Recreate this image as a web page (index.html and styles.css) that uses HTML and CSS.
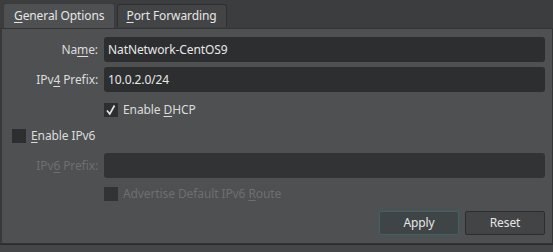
FILE: index.html
```html
<!DOCTYPE html>
<html>
	<head>
		<meta charset="utf-8" />
		<title>NAT Network</title>
		<link rel="stylesheet" href="styles.css">
	</head>
	<body>
<div class="tabs">
    <div class="tab active"><u>G</u>eneral Options</div>
    <div class="tab"><u>P</u>ort Forwarding</div>
</div>
<div class="pane">
    <div class="row">
        <label class="lbl">Na<u>m</u>e:</label>
        <div class="field">NatNetwork-CentOS9</div>
    </div>
    <div class="row">
        <label class="lbl">IPv<u>4</u> Prefix:</label>
        <div class="field">10.0.2.0/24</div>
    </div>
    <div class="row check-row">
        <span class="box"><svg width="14" height="14" viewBox="0 0 14 14"><polyline points="3,7.5 5.8,11 10.5,2.5" fill="none" stroke="#e4e4e4" stroke-width="1.7"/></svg></span>
        <span>Enable <u>D</u>HCP</span>
    </div>
    <div class="row outer">
        <span class="box"></span>
        <span><u>E</u>nable IPv6</span>
    </div>
    <div class="row off">
        <label class="lbl">IPv<u>6</u> Prefix:</label>
        <div class="field"></div>
    </div>
    <div class="row check-row off">
        <span class="box"></span>
        <span>Advertise Default IPv6 <u>R</u>oute</span>
    </div>
    <div class="buttons">
        <div class="btn apply">Apply</div>
        <div class="btn">Reset</div>
    </div>
</div>
<div class="foot"></div>
	</body>
</html>
```

FILE: styles.css
```css
* {
    margin: 0;
    padding: 0;
    box-sizing: border-box;
}
body {
    width: 553px;
    height: 252px;
    background: #3c3d3f;
    font-family: "Noto Sans", "Liberation Sans", sans-serif;
    font-size: 12px;
    letter-spacing: -0.1px;
    color: #dcdcdc;
    overflow: hidden;
}
u {
    text-decoration: underline;
    text-underline-offset: 2px;
}
.tabs {
    display: flex;
    align-items: flex-end;
    height: 28px;
    padding-left: 3px;
    gap: 2px;
}
.tab {
    height: 23px;
    padding: 0 9px 0 8px;
    line-height: 21px;
    background: #434446;
    border: 1px solid #2e2f31;
    border-bottom: none;
    border-radius: 3px 3px 0 0;
    color: #e6e6e6;
    margin-bottom: 1px;
}
.tab.active {
    height: 25px;
    padding: 0 10px;
    line-height: 23px;
    background: #4f5052;
    margin-bottom: 0;
    border-color: #3a3b3d;
}
.pane {
    height: 216px;
    background: #4f5052;
    border: 1px solid #333436;
    border-left: 2px solid #39393b;
    padding: 8px 7px 0 10px;
}
.row {
    display: flex;
    align-items: center;
    height: 25px;
    margin-bottom: 5px;
}
.lbl {
    width: 92px;
    text-align: right;
    padding-right: 6px;
}
.field {
    flex: 1;
    height: 25px;
    background: #2d2e30;
    border-radius: 3px;
    padding-left: 4px;
    line-height: 25px;
    color: #e8e8e8;
}
.check-row {
    padding-left: 92px;
}
.check-row.off {
    margin-top: -2px;
}
.box {
    width: 14px;
    height: 14px;
    background: #2d2e30;
    margin-right: 5px;
}
.box svg {
    display: block;
}
.row.outer {
    margin-top: -4px;
}
.off {
    color: #6e6f71;
}
.off .box, .off .field {
    background: #323335;
}
.buttons {
    display: flex;
    justify-content: flex-end;
    gap: 6px;
    margin-top: 5px;
}
.btn {
    width: 80px;
    height: 24px;
    line-height: 22px;
    text-align: center;
    background: #434446;
    border: 1px solid #2c2d2f;
    border-radius: 2px;
    color: #e6e6e6;
}
.btn.apply {
    border-color: #3d6268;
    background: #3f4446;
}
.foot {
    height: 8px;
    border-top: 1px solid #2a2b2d;
    background: #454648;
}
```
